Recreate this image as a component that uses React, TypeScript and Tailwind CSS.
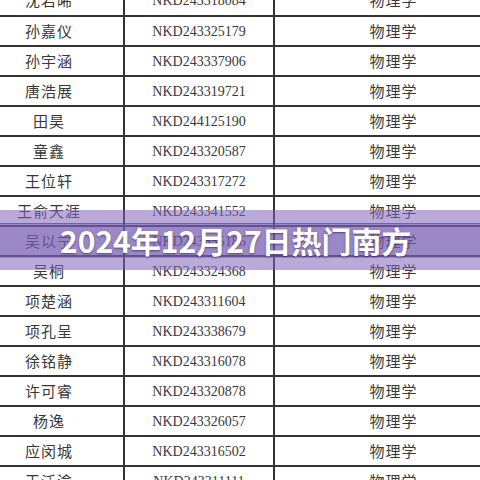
import React from "react";

const rows: [string, string][] = [
  ["沈若晞", "NKD243318084"],
  ["孙嘉仪", "NKD243325179"],
  ["孙宇涵", "NKD243337906"],
  ["唐浩展", "NKD243319721"],
  ["田昊", "NKD244125190"],
  ["童鑫", "NKD243320587"],
  ["王位轩", "NKD243317272"],
  ["王俞天涯", "NKD243341552"],
  ["吴以宁", "NKD243335186"],
  ["吴桐", "NKD243324368"],
  ["项楚涵", "NKD243311604"],
  ["项孔呈", "NKD243338679"],
  ["徐铭静", "NKD243316078"],
  ["许可睿", "NKD243320878"],
  ["杨逸", "NKD243326057"],
  ["应闵城", "NKD243316502"],
  ["王泛渝", "NKD243311111"],
];

export default function App() {
  return (
    <div className="relative w-[480px] h-[480px] overflow-hidden bg-white">
      <div className="mt-[-15px] flex flex-col">
        {rows.map(([name, id], i) => (
          <div
            key={i}
            className={`grid grid-cols-[125px_150px_1fr] h-[30px] ${i > 0 ? "border-t-2 border-[#333]" : ""}`}
          >
            <div
              className="flex items-center justify-center pr-[25px] border-r-2 border-[#333] text-[15px] text-[#383838] tracking-[1px]"
              style={{ fontFamily: '"Noto Sans CJK SC", sans-serif' }}
            >
              {name}
            </div>
            <div
              className="flex items-center justify-center border-r-2 border-[#333] text-[14px] text-[#383838]"
              style={{ fontFamily: '"Liberation Serif", serif' }}
            >
              {id}
            </div>
            <div
              className="flex items-center justify-center pl-[32px] text-[15px] text-[#383838] tracking-[1px]"
              style={{ fontFamily: '"Noto Sans CJK SC", sans-serif' }}
            >
              物理学
            </div>
          </div>
        ))}
      </div>
      <div className="absolute left-0 right-0 top-[210px] h-[60px] bg-[rgba(130,100,185,0.55)] flex flex-col justify-center">
        <div className="h-[35px] bg-[rgba(110,85,170,0.4)] border-t border-[rgba(80,55,140,0.5)]" />
      </div>
      <div className="absolute left-0 right-0 top-[210px] h-[60px] flex items-center pl-[60px]">
        <span
          className="text-[30px] font-bold text-white leading-none [text-shadow:0_1px_2px_rgba(40,20,80,0.6)]"
          style={{ fontFamily: '"Noto Sans CJK SC", "Noto Sans", sans-serif' }}
        >
          2024年12月27日热门南方
        </span>
      </div>
    </div>
  );
}
